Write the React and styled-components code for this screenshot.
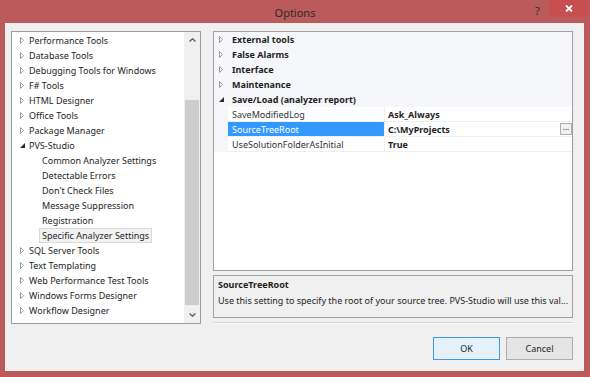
import React from 'react'
import styled, { createGlobalStyle } from 'styled-components'

const Global = createGlobalStyle`
  html, body { margin: 0; padding: 0; }
  body {
    font-family: "Noto Sans", "Open Sans", sans-serif;
    font-size: 9px;
    color: #1e1e1e;
  }
`

const Frame = styled.div`
  width: 590px;
  height: 377px;
  background: #bb5a5b;
  display: flex;
  flex-direction: column;
  box-sizing: border-box;
  overflow: hidden;
`

const TitleBar = styled.div`
  height: 23px;
  position: relative;
  display: flex;
  align-items: center;
  justify-content: center;
`

const Title = styled.div`
  font-size: 11px;
  color: #2b2b2b;
  padding-top: 1px;
`

const Help = styled.span`
  position: absolute;
  left: 535px;
  top: 3px;
  font-size: 11px;
  color: #2b2b2b;
`

const Close = styled.div`
  position: absolute;
  left: 549px;
  top: 0;
  width: 39px;
  height: 17px;
  background: #c74f50;
  display: flex;
  align-items: center;
  justify-content: center;
`

const Client = styled.div`
  flex: 1;
  margin: 0 6px 6px 5px;
  background: #f0f0f0;
  padding: 8px 11px 0 6px;
  display: flex;
  flex-direction: column;
`

const Main = styled.div`
  display: flex;
  gap: 12px;
  height: 293px;
`

const TreePanel = styled.div`
  width: 190px;
  box-sizing: border-box;
  border: 1px solid #9c9c9c;
  background: #fff;
  display: flex;
`

const TreeList = styled.div`
  flex: 1;
  min-width: 0;
  overflow: hidden;
  padding-top: 1px;
`

const TreeRow = styled.div`
  height: 15px;
  display: flex;
  align-items: center;
  padding-left: ${p => (p.$child ? 27 : 7)}px;
  white-space: nowrap;
`

const Expander = styled.span`
  width: 6px;
  display: inline-flex;
  justify-content: center;
  margin-right: 1px;
`

const TreeLabel = styled.span`
  padding: 0 2px;
  line-height: 13px;
  border: 1px solid ${p => (p.$selected ? '#dadada' : 'transparent')};
  background: ${p => (p.$selected ? '#f2f2f2' : 'transparent')};
`

const Scrollbar = styled.div`
  width: 16px;
  flex: none;
  background: #f0f0f0;
  display: flex;
  flex-direction: column;
  align-items: center;
`

const ScrollArrow = styled.div`
  height: 16px;
  width: 16px;
  display: flex;
  align-items: center;
  justify-content: center;
`

const ScrollTrack = styled.div`
  flex: 1;
  width: 100%;
  display: flex;
  flex-direction: column;
  padding: 0 1px;
  box-sizing: border-box;
`

const Thumb = styled.div`
  margin-top: 52px;
  margin-bottom: 2px;
  flex: 1;
  background: #cdcdcd;
`

const RightCol = styled.div`
  width: 360px;
  display: flex;
  flex-direction: column;
`

const Grid = styled.div`
  height: 241px;
  box-sizing: border-box;
  border: 1px solid #a0a0a0;
  background: #fff;
  display: flex;
  flex-direction: column;
`

const GridRow = styled.div`
  height: 15px;
  display: flex;
  align-items: stretch;
  background: ${p => (p.$category ? '#f5f7fb' : '#fff')};
  white-space: nowrap;
`

const Gutter = styled.div`
  width: 14px;
  flex: none;
  background: #f5f7fb;
  display: flex;
  align-items: center;
  justify-content: center;
`

const CatLabel = styled.div`
  font-weight: bold;
  padding-left: 4px;
  display: flex;
  align-items: center;
`

const NameCell = styled.div`
  width: 157px;
  flex: none;
  box-sizing: border-box;
  padding-left: 4px;
  display: flex;
  align-items: center;
  border-bottom: 1px solid #f0f0f0;
  border-right: 1px solid #f0f0f0;
  background: ${p => (p.$selected ? '#3399ff' : '#fff')};
  color: ${p => (p.$selected ? '#fff' : '#333')};
`

const ValueCell = styled.div`
  flex: 1;
  padding-left: 3px;
  display: flex;
  align-items: center;
  font-weight: bold;
  border-bottom: 1px solid #f0f0f0;
`

const Ellipsis = styled.div`
  margin-left: auto;
  width: 12px;
  height: 12px;
  border: 1px solid #adadad;
  background: #f0f0f0;
  font-size: 8px;
  font-weight: normal;
  line-height: 6px;
  text-align: center;
  box-sizing: border-box;
`

const Description = styled.div`
  margin-top: 4px;
  height: 43px;
  box-sizing: border-box;
  border: 1px solid #a0a0a0;
  background: #f0f0f0;
  padding: 1px 4px;
  white-space: nowrap;
`

const DescTitle = styled.div`
  font-weight: bold;
  line-height: 15px;
`

const DescText = styled.div`
  line-height: 17px;
`

const Separator = styled.div`
  margin-top: 4px;
  height: 1px;
  background: #d5d5d5;
  border-bottom: 1px solid #fcfcfc;
`

const Footer = styled.div`
  display: flex;
  justify-content: flex-end;
  gap: 6px;
  margin-top: 13px;
`

const Button = styled.div`
  width: 67px;
  height: 23px;
  box-sizing: border-box;
  border: 1px solid ${p => (p.$default ? '#3c9ae8' : '#acacac')};
  background: ${p => (p.$default ? '#e5f1fb' : '#e5e5e5')};
  display: flex;
  align-items: center;
  justify-content: center;
  color: #1e1e1e;
`

const Collapsed = () => (
  <svg width="4" height="7" viewBox="0 0 4 7">
    <path d="M0.5 0.5 L3.5 3.5 L0.5 6.5 Z" fill="none" stroke="#9a9a9a" strokeWidth="1" />
  </svg>
)

const Expanded = () => (
  <svg width="5" height="5" viewBox="0 0 5 5">
    <path d="M5 0 L5 5 L0 5 Z" fill="#2b2b2b" />
  </svg>
)

const treeItems = [
  { label: 'Performance Tools' },
  { label: 'Database Tools' },
  { label: 'Debugging Tools for Windows' },
  { label: 'F# Tools' },
  { label: 'HTML Designer' },
  { label: 'Office Tools' },
  { label: 'Package Manager' },
  { label: 'PVS-Studio', open: true },
  { label: 'Common Analyzer Settings', child: true },
  { label: 'Detectable Errors', child: true },
  { label: "Don't Check Files", child: true },
  { label: 'Message Suppression', child: true },
  { label: 'Registration', child: true },
  { label: 'Specific Analyzer Settings', child: true, selected: true },
  { label: 'SQL Server Tools' },
  { label: 'Text Templating' },
  { label: 'Web Performance Test Tools' },
  { label: 'Windows Forms Designer' },
  { label: 'Workflow Designer' },
]

const categories = ['External tools', 'False Alarms', 'Interface', 'Maintenance']

const props = [
  { name: 'SaveModifiedLog', value: 'Ask_Always' },
  { name: 'SourceTreeRoot', value: 'C:\\MyProjects', selected: true },
  { name: 'UseSolutionFolderAsInitial', value: 'True' },
]

export default function App() {
  return (
    <Frame>
      <Global />
      <TitleBar>
        <Title>Options</Title>
        <Help>?</Help>
        <Close>
          <svg width="8" height="7" viewBox="0 0 8 7">
            <path d="M1 0.5 L7 6.5 M7 0.5 L1 6.5" stroke="#fff" strokeWidth="1.8" />
          </svg>
        </Close>
      </TitleBar>
      <Client>
        <Main>
          <TreePanel>
            <TreeList>
              {treeItems.map(item => (
                <TreeRow key={item.label} $child={item.child}>
                  {!item.child && (
                    <Expander>{item.open ? <Expanded /> : <Collapsed />}</Expander>
                  )}
                  <TreeLabel $selected={item.selected}>{item.label}</TreeLabel>
                </TreeRow>
              ))}
            </TreeList>
            <Scrollbar>
              <ScrollArrow>
                <svg width="7" height="4" viewBox="0 0 7 4">
                  <path d="M0.5 3.5 L3.5 0.8 L6.5 3.5" fill="none" stroke="#606060" strokeWidth="1.4" />
                </svg>
              </ScrollArrow>
              <ScrollTrack>
                <Thumb />
              </ScrollTrack>
              <ScrollArrow>
                <svg width="7" height="4" viewBox="0 0 7 4">
                  <path d="M0.5 0.5 L3.5 3.2 L6.5 0.5" fill="none" stroke="#606060" strokeWidth="1.4" />
                </svg>
              </ScrollArrow>
            </Scrollbar>
          </TreePanel>
          <RightCol>
            <Grid>
              {categories.map(c => (
                <GridRow key={c} $category>
                  <Gutter><Collapsed /></Gutter>
                  <CatLabel>{c}</CatLabel>
                </GridRow>
              ))}
              <GridRow $category>
                <Gutter><Expanded /></Gutter>
                <CatLabel>Save/Load (analyzer report)</CatLabel>
              </GridRow>
              {props.map(p => (
                <GridRow key={p.name}>
                  <Gutter />
                  <NameCell $selected={p.selected}>{p.name}</NameCell>
                  <ValueCell>
                    {p.value}
                    {p.selected && <Ellipsis>...</Ellipsis>}
                  </ValueCell>
                </GridRow>
              ))}
            </Grid>
            <Description>
              <DescTitle>SourceTreeRoot</DescTitle>
              <DescText>
                Use this setting to specify the root of your source tree. PVS-Studio will use this val...
              </DescText>
            </Description>
            <Separator />
          </RightCol>
        </Main>
        <Footer>
          <Button $default>OK</Button>
          <Button>Cancel</Button>
        </Footer>
      </Client>
    </Frame>
  )
}
